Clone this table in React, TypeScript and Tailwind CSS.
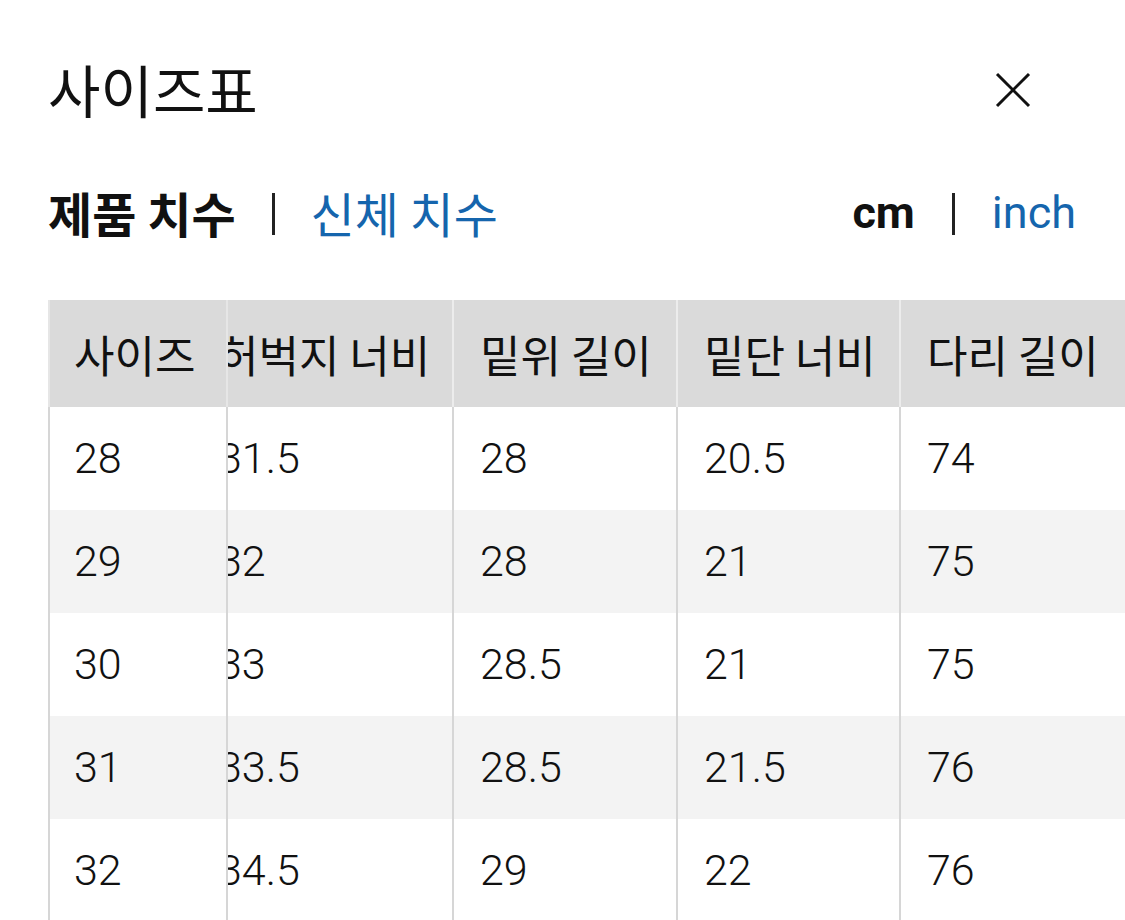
import React from "react";

const HEADERS = ["허벅지 너비", "밑위 길이", "밑단 너비", "다리 길이"];

// widths of the scrolled columns (auto layout from content + padding)
const COL_W = ["w-[262px]", "w-[224px]", "w-[223px]", "w-[226px]"];

const ROWS: { size: string; values: string[] }[] = [
  { size: "28", values: ["31.5", "28", "20.5", "74"] },
  { size: "29", values: ["32", "28", "21", "75"] },
  { size: "30", values: ["33", "28.5", "21", "75"] },
  { size: "31", values: ["33.5", "28.5", "21.5", "76"] },
  { size: "32", values: ["34.5", "29", "22", "76"] },
];

function CloseIcon() {
  return (
    <svg width="36" height="36" viewBox="0 0 36 36" fill="none" stroke="#111" strokeWidth="3" strokeLinecap="butt">
      <line x1="2" y1="2" x2="34" y2="34" />
      <line x1="34" y1="2" x2="2" y2="34" />
    </svg>
  );
}

export default function App() {
  return (
    <div className="min-h-[920px] w-[1125px] overflow-hidden bg-white text-[#111] font-['Roboto','Noto_Sans_CJK_KR',sans-serif]">
      {/* Title */}
      <div className="flex h-[186px] items-center justify-between pl-[48px] pr-[94px]">
        <h1 className="-mt-[10px] text-[57px] font-normal leading-none font-['Noto_Sans_CJK_KR',sans-serif]">사이즈표</h1>
        <button className="-mt-[6px] flex items-center">
          <CloseIcon />
        </button>
      </div>

      {/* Tabs + units */}
      <div className="-mt-[3px] flex h-[58px] items-center justify-between pl-[48px] pr-[49px] leading-none">
        <div className="flex items-center gap-[36px] text-[48px] font-['Noto_Sans_CJK_KR',sans-serif]">
          <span className="font-bold">제품 치수</span>
          <span className="mt-[3px] h-[42px] w-[3px] bg-[#222]" />
          <span className="text-[#1565ad]">신체 치수</span>
        </div>
        <div className="flex items-center gap-[37px] text-[45px]">
          <span className="font-bold">cm</span>
          <span className="mt-[3px] h-[42px] w-[3px] bg-[#222]" />
          <span className="text-[#1565ad]">inch</span>
        </div>
      </div>

      {/* Table */}
      <div className="ml-[48px] mt-[59px]">
        {/* Header row */}
        <div className="flex h-[107px] bg-[#dadada] text-[44px] leading-none font-['Noto_Sans_CJK_KR',sans-serif]">
          <div className="flex w-[180px] shrink-0 items-center border-l-2 border-r-2 border-[#e6e6e6] pl-[24px]">
            사이즈
          </div>
          <div className="min-w-0 flex-1 overflow-hidden">
            <div className="-ml-[36px] flex h-full">
              {HEADERS.map((h, i) => (
                <div
                  key={h}
                  className={`flex h-full shrink-0 items-center whitespace-nowrap border-r-2 border-[#ececec] pl-[26px] ${COL_W[i]}`}
                >
                  {h}
                </div>
              ))}
            </div>
          </div>
        </div>

        {/* Body rows */}
        {ROWS.map((row, r) => (
          <div
            key={row.size}
            className={`flex h-[103px] text-[43px] font-light leading-none ${r % 2 === 1 ? "bg-[#f3f3f3]" : "bg-white"}`}
          >
            <div className="flex w-[180px] shrink-0 items-center border-l-2 border-r-2 border-[#d6d6d6] pl-[24px]">
              {row.size}
            </div>
            <div className="min-w-0 flex-1 overflow-hidden">
              <div className="-ml-[36px] flex h-full">
                {row.values.map((v, i) => (
                  <div
                    key={i}
                    className={`flex h-full shrink-0 items-center border-r-2 border-[#d6d6d6] pl-[26px] ${COL_W[i]}`}
                  >
                    {v}
                  </div>
                ))}
              </div>
            </div>
          </div>
        ))}
      </div>
    </div>
  );
}
